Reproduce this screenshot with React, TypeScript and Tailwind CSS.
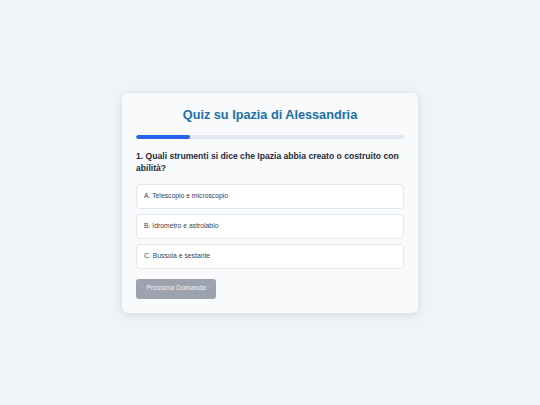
export default function App() {
  const options = [
    "A. Telescopio e microscopio",
    "B. Idrometro e astrolabio",
    "C. Bussola e sestante",
  ];

  return (
    <div
      className="min-h-screen w-full flex items-center justify-center bg-[#f0f4f8]"
      style={{ fontFamily: '"Liberation Sans", Arial, sans-serif' }}
    >
      <div className="w-[296px] bg-[#f8fafc] rounded-[6px] shadow-[0_2px_10px_rgba(0,0,0,0.12)] px-[14px] pt-[14px] pb-[14px]">
        {/* Title */}
        <h1 className="text-center text-[12.7px] leading-[17px] font-bold text-[#1c6fa8]">
          Quiz su Ipazia di Alessandria
        </h1>

        {/* Progress */}
        <div className="mt-[11px] h-[4px] w-full rounded-full bg-[#e2e8f0] overflow-hidden">
          <div className="h-full w-[20%] rounded-full bg-[#2563eb]" />
        </div>

        {/* Question */}
        <p className="mt-[11px] text-[8.6px] leading-[12px] font-bold text-[#1f2937]">
          1. Quali strumenti si dice che Ipazia abbia creato o costruito con abilità?
        </p>

        <div className="mt-[10px] flex flex-col gap-[5px]">
          {options.map((o) => (
            <div
              key={o}
              className="h-[25px] flex items-center px-[7px] bg-white border border-[#e2e8f0] rounded-[4px] text-[6.8px] text-[#374151]"
            >
              {o}
            </div>
          ))}
        </div>

        <button
          disabled
          className="mt-[10px] w-[80px] h-[20px] rounded-[3px] bg-[#9ca3af] text-[6.8px] text-[#eef0f3] flex items-center justify-center"
        >
          Prossima Domanda
        </button>
      </div>
    </div>
  );
}
